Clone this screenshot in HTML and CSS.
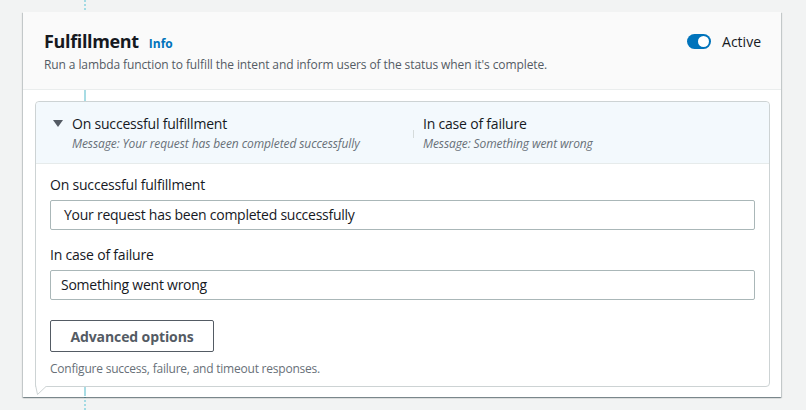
FILE: index.html
```html
<!DOCTYPE html>
<html lang="en">
<head>
<meta charset="utf-8">
<title>Fulfillment</title>
<link rel="stylesheet" href="styles.css">
</head>
<body>
<div class="page">
  <div class="timeline"></div>
  <section class="card">
    <header class="card-header">
      <div class="heading">
        <div class="title-row">
          <h2 class="title">Fulfillment</h2>
          <a class="info">Info</a>
        </div>
        <p class="desc">Run a lambda function to fulfill the intent and inform users of the status when it's complete.</p>
      </div>
      <div class="toggle-wrap">
        <span class="toggle"><span class="knob"></span></span>
        <span class="toggle-label">Active</span>
      </div>
    </header>
    <div class="card-body">
      <div class="bubble">
        <div class="bubble-head">
          <div class="col">
            <div class="col-title"><span class="caret"></span>On successful fulfillment</div>
            <div class="col-msg">Message: Your request has been completed successfully</div>
          </div>
          <span class="sep"></span>
          <div class="col col-right">
            <div class="col-title">In case of failure</div>
            <div class="col-msg">Message: Something went wrong</div>
          </div>
        </div>
        <div class="bubble-body">
          <label class="label">On successful fulfillment</label>
          <div class="input input-first">Your request has been completed successfully</div>
          <label class="label label-gap">In case of failure</label>
          <div class="input">Something went wrong</div>
          <button class="btn">Advanced options</button>
          <p class="hint">Configure success, failure, and timeout responses.</p>
        </div>
        <svg class="tail" width="14" height="11" viewBox="0 0 14 11">
          <polygon points="0.5,0 2.5,9.5 11.5,1 11.5,0" fill="#ffffff"/>
          <polyline points="0.5,0 2.5,9.5 11,1.5" fill="none" stroke="#cdd3d4" stroke-width="1"/>
        </svg>
      </div>
    </div>
  </section>
</div>
</body>
</html>
```
FILE: styles.css
```css
* { box-sizing: border-box; }
html, body { margin: 0; padding: 0; }
body {
  background: #f2f3f3;
  font-family: "Open Sans", "Noto Sans", Arial, sans-serif;
  color: #16191f;
  width: 806px;
  height: 410px;
  overflow: hidden;
}
.page {
  position: relative;
  padding: 12px 25px 13px 23px;
  height: 410px;
}
.timeline {
  position: absolute;
  left: 84px;
  top: 0;
  bottom: 0;
  width: 2px;
  background: repeating-linear-gradient(to bottom, #a3dbe4 0 2px, transparent 2px 4px);
}
.card {
  position: relative;
  background: #ffffff;
  height: 385px;
  box-shadow: 0 1px 1px 0 rgba(0, 28, 36, 0.3), 1px 1px 1px 0 rgba(0, 28, 36, 0.15), -1px 1px 1px 0 rgba(0, 28, 36, 0.15);
}
.card-header {
  display: flex;
  justify-content: space-between;
  align-items: flex-start;
  background: #fafafa;
  border-bottom: 1px solid #eaeded;
  padding: 18px 20px 17px 21px;
  height: 78px;
}
.title-row {
  display: flex;
  align-items: baseline;
  height: 22px;
}
.title {
  margin: 0;
  font-size: 18px;
  font-weight: 700;
  line-height: 22px;
  letter-spacing: -0.35px;
  color: #16191f;
}
.info {
  margin-left: 10px;
  font-size: 12px;
  font-weight: 700;
  color: #0073bb;
}
.desc {
  margin: 5px 0 0;
  font-size: 12px;
  line-height: 16px;
  letter-spacing: -0.1px;
  color: #545b64;
}
.toggle-wrap {
  display: flex;
  align-items: center;
  height: 22px;
  gap: 11px;
}
.toggle {
  position: relative;
  width: 24px;
  height: 15px;
  border-radius: 8px;
  background: #0073bb;
}
.knob {
  position: absolute;
  right: 2px;
  top: 2px;
  width: 11px;
  height: 11px;
  border-radius: 50%;
  background: #ffffff;
}
.toggle-label {
  font-size: 14px;
  color: #16191f;
}
.card-body {
  position: relative;
  padding: 11px 11px 10px 12px;
  height: 306px;
}
.card-body::before {
  content: "";
  position: absolute;
  left: 61px;
  top: 0;
  bottom: 0;
  width: 2px;
  background: #a8dce4;
}
.bubble {
  position: relative;
  z-index: 1;
  height: 286px;
  background: #ffffff;
  border: 1px solid #cdd3d4;
  border-radius: 4px 4px 4px 0;
}
.bubble-head {
  display: grid;
  grid-template-columns: 360px 1px 1fr;
  align-items: center;
  background: #f3f9fd;
  border-bottom: 1px solid #e6ebeb;
  border-radius: 4px 4px 0 0;
  padding: 11px 17px 11px 17px;
  height: 62px;
}
.col-title {
  display: flex;
  align-items: center;
  font-size: 14px;
  line-height: 20px;
  letter-spacing: -0.2px;
  color: #16191f;
}
.caret {
  width: 0;
  height: 0;
  border-left: 5px solid transparent;
  border-right: 5px solid transparent;
  border-top: 7px solid #545b64;
  margin-right: 9px;
}
.col-msg {
  margin-top: 2px;
  padding-left: 19px;
  font-size: 12px;
  line-height: 16px;
  font-style: italic;
  letter-spacing: -0.1px;
  color: #687078;
}
.col-right .col-msg { padding-left: 0; }
.col-right { padding-left: 9px; }
.sep {
  width: 1px;
  height: 8px;
  background: #d5dbdb;
  margin-top: 2px;
}
.bubble-body {
  padding: 11px 14px 0 14px;
}
.label {
  display: block;
  font-size: 14px;
  line-height: 20px;
  letter-spacing: -0.2px;
  color: #16191f;
}
.label-gap { margin-top: 15px; }
.input {
  margin-top: 5px;
  height: 30px;
  border: 1px solid #aab7b8;
  border-radius: 2px;
  padding: 0 10px;
  font-size: 14px;
  line-height: 28px;
  letter-spacing: -0.25px;
  color: #16191f;
}
.input-first { padding-left: 13px; }
.btn {
  display: block;
  margin-top: 20px;
  width: 164px;
  height: 32px;
  background: #ffffff;
  border: 1px solid #545b64;
  border-radius: 2px;
  font-family: inherit;
  font-size: 14px;
  font-weight: 700;
  letter-spacing: -0.1px;
  color: #545b64;
  padding: 0;
}
.hint {
  margin: 9px 0 0;
  font-size: 12px;
  line-height: 16px;
  letter-spacing: -0.22px;
  color: #687078;
}
.tail {
  position: absolute;
  left: -1px;
  bottom: -10px;
}
```
